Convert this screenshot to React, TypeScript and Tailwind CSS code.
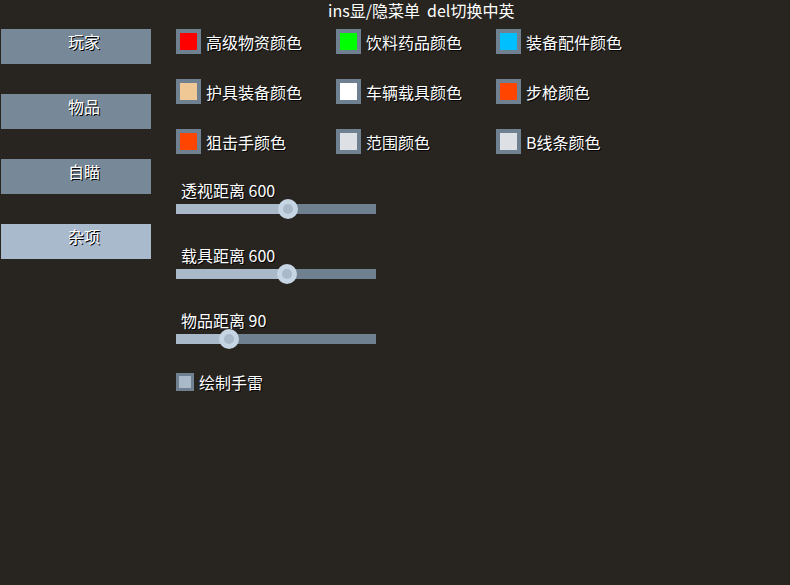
// Menu de configuración (ESP) — panel oscuro con pestañas a la izquierda.
const TABS = [
  { label: '玩家', active: false },
  { label: '物品', active: false },
  { label: '自瞄', active: false },
  { label: '杂项', active: true },
];

const COLORS = [
  { label: '高级物资颜色', color: 'bg-[#ff0000]' },
  { label: '饮料药品颜色', color: 'bg-[#00ff00]' },
  { label: '装备配件颜色', color: 'bg-[#00bfff]' },
  { label: '护具装备颜色', color: 'bg-[#f0c896]' },
  { label: '车辆载具颜色', color: 'bg-[#ffffff]' },
  { label: '步枪颜色', color: 'bg-[#ff4500]' },
  { label: '狙击手颜色', color: 'bg-[#ff4500]' },
  { label: '范围颜色', color: 'bg-[#dde0e4]' },
  { label: 'B线条颜色', color: 'bg-[#dde0e4]' },
];

const SLIDERS = [
  { label: '透视距离 600', pos: 112 },
  { label: '载具距离 600', pos: 111 },
  { label: '物品距离 90', pos: 53 },
];

const shadow = '[text-shadow:1px_1px_0_#000]';

export default function App() {
  return (
    <div
      className="h-[585px] w-[790px] overflow-hidden bg-[#282520] text-white"
      style={{ fontFamily: '"Noto Sans CJK SC", "Noto Sans", sans-serif' }}
    >
      {/* Título */}
      <div className="h-[29px] pl-[328px] text-[16px] leading-[20px] whitespace-pre">
        ins显/隐菜单  del切换中英
      </div>

      <div className="flex">
        {/* Pestañas */}
        <div className="ml-[1px] flex w-[150px] flex-col gap-[30px]">
          {TABS.map((t) => (
            <div
              key={t.label}
              className={`h-[35px] pl-[16px] pt-[2px] text-center text-[16px] leading-[20px] ${shadow} ${
                t.active ? 'bg-[#a9bacd]' : 'bg-[#778899]'
              }`}
            >
              {t.label}
            </div>
          ))}
        </div>

        {/* Contenido */}
        <div className="ml-[25px] flex flex-col">
          <div className="grid grid-cols-[160px_160px_160px] gap-y-[25px]">
            {COLORS.map((c) => (
              <div key={c.label} className="flex h-[25px] items-center gap-[5px]">
                <div className="h-[25px] w-[25px] border-[4px] border-[#6f8090]">
                  <div className={`h-full w-full ${c.color}`} />
                </div>
                <span className={`text-[16px] leading-[20px] ${shadow}`}>{c.label}</span>
              </div>
            ))}
          </div>

          <div className="mt-[27px] flex flex-col gap-[32px]">
            {SLIDERS.map((s) => (
              <div key={s.label} className="flex flex-col">
                <div className={`h-[23px] pl-[5px] text-[16px] leading-[19px] ${shadow}`}>{s.label}</div>
                <div className="relative flex h-[10px] w-[200px] bg-[#6f8090]">
                  <div className="h-full bg-[#a9b9c9]" style={{ width: s.pos }} />
                  <div
                    className="absolute top-[-5px] flex h-[20px] w-[20px] -translate-x-1/2 items-center justify-center rounded-full bg-[#c6d5e4]"
                    style={{ left: s.pos }}
                  >
                    <div className="h-[10px] w-[10px] rounded-full bg-[#a9b9c9]" />
                  </div>
                </div>
              </div>
            ))}
          </div>

          <div className="mt-[28px] flex items-center gap-[5px]">
            <div className="h-[18px] w-[18px] border-[3px] border-[#6f8090] bg-[#a9b9c9]" />
            <span className={`text-[16px] leading-[20px] ${shadow}`}>绘制手雷</span>
          </div>
        </div>
      </div>
    </div>
  );
}
